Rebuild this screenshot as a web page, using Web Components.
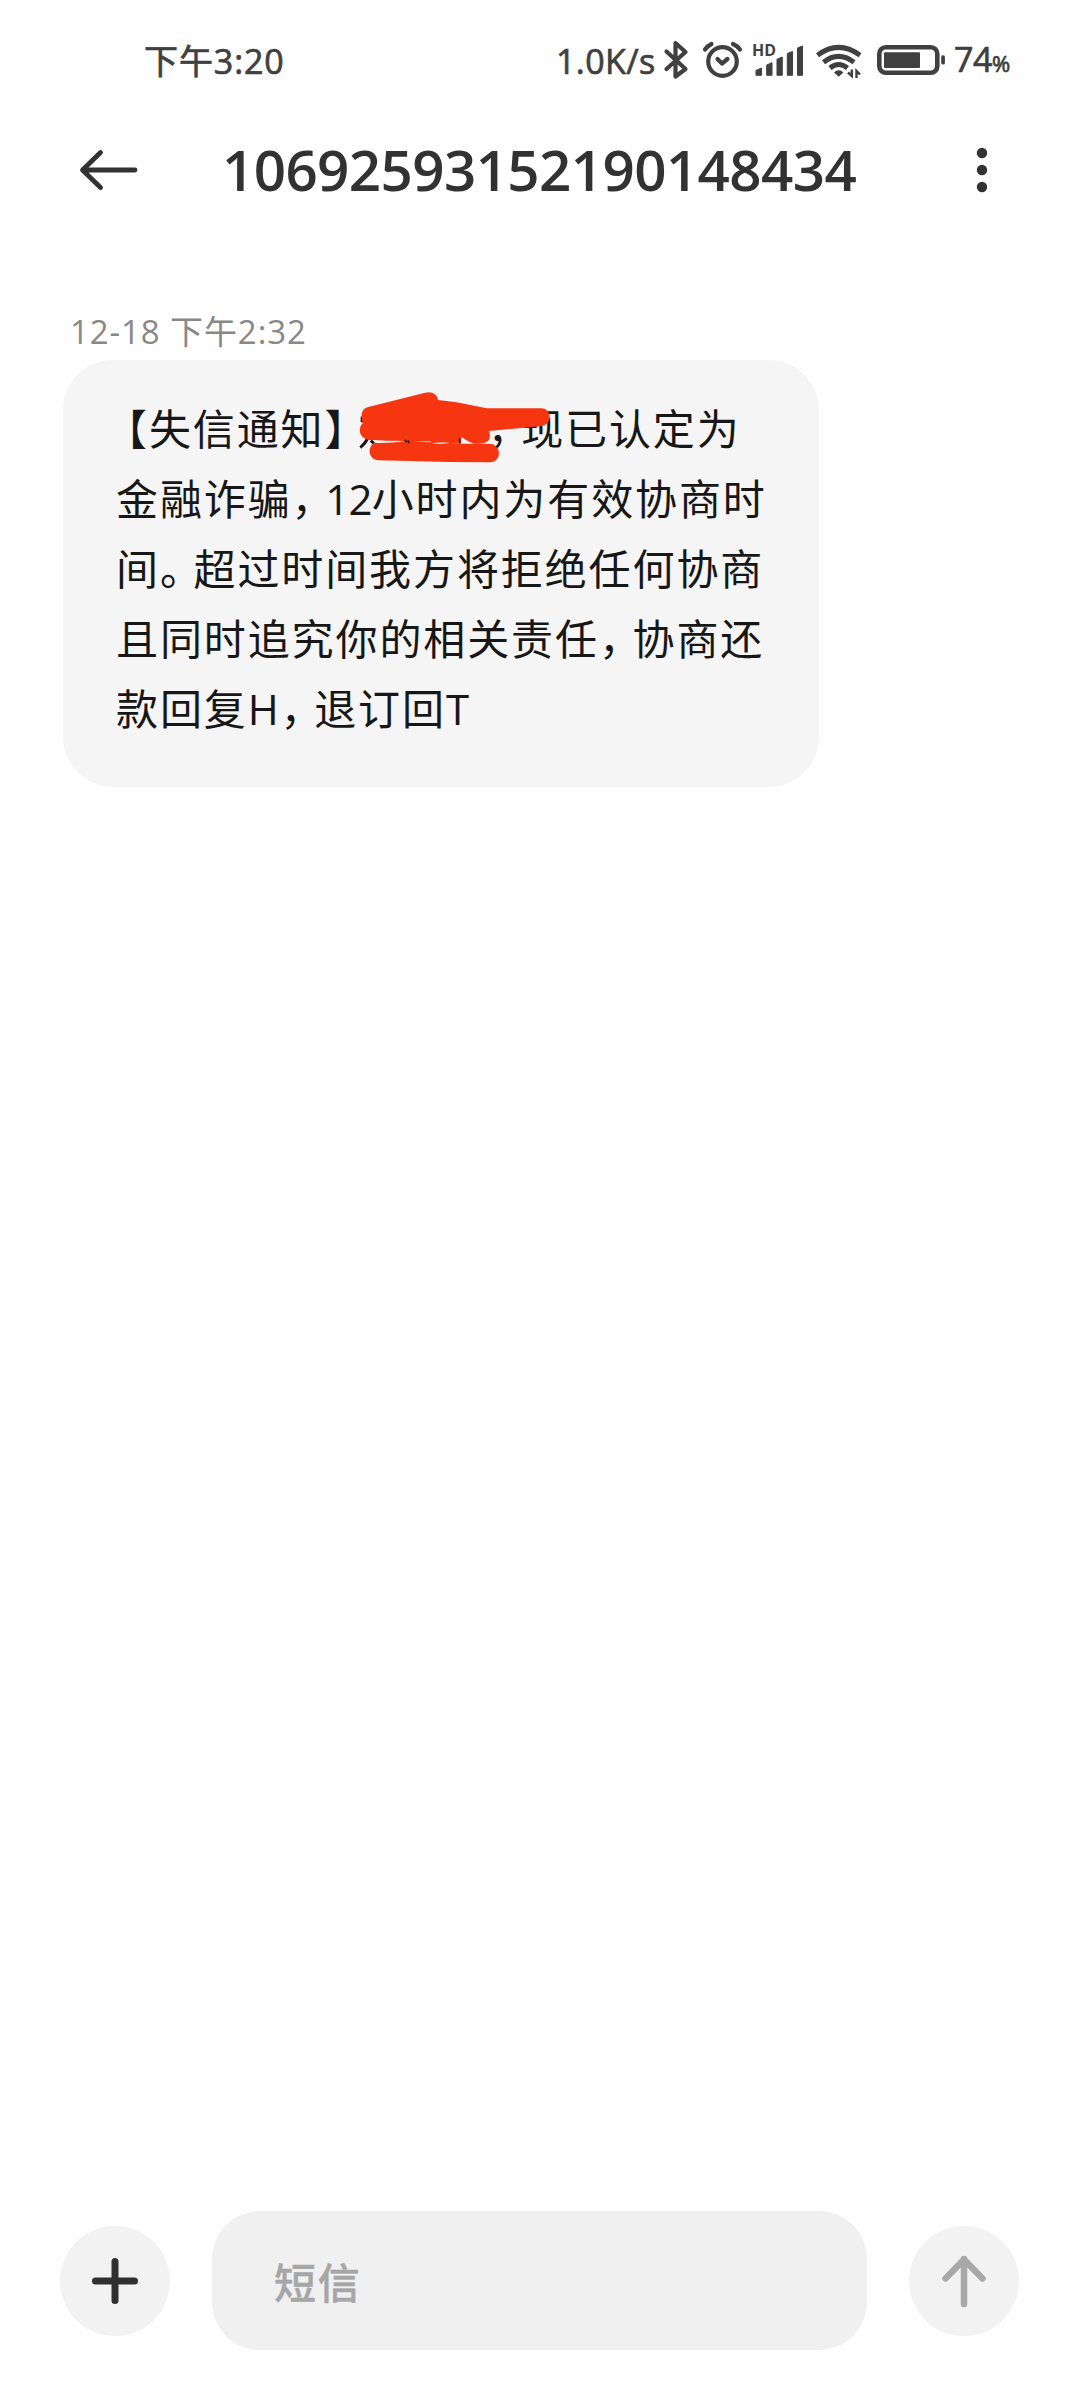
<!DOCTYPE html>
<html lang="zh-CN">
<head>
<meta charset="utf-8">
<meta name="viewport" content="width=device-width">
<title>短信</title>
<style>
  body {
    margin: 0;
    background: #fefefe;
    font-family: "Open Sans", "Noto Sans CJK SC", sans-serif;
  }

  .tight {
    letter-spacing: -8.4px;
  }

  .open {
    margin-left: -11px;
  }

  .close {
    letter-spacing: -10px;
  }

  .digits {
    letter-spacing: -0.8px;
  }

  .hidden-name {
    display: inline-block;
    width: 131px;
  }
</style>
</head>
<body>
<message-screen>
  <status-bar slot="status" time="下午3:20" speed="1.0K/s" battery="74"></status-bar>
  <thread-header slot="header">10692593152190148434</thread-header>
  <message-bubble time="12-18 下午2:32"><span class="open">【</span>失信通知<span class="close">】</span><span class="hidden-name"></span><span class="tight">，</span>现已认定为<br>金融诈骗<span class="tight">，</span><span class="digits">12</span>小时内为有效协商时<br>间<span class="tight">。</span>超过时间我方将拒绝任何协商<br>且同时追究你的相关责任<span class="tight">，</span>协商还<br>款回复H<span class="tight">，</span>退订回T<scribble-mark slot="mark"></scribble-mark></message-bubble>
  <message-composer slot="composer">短信</message-composer>
</message-screen>

<script>
/**
 * Full-height screen: status bar, header, thread, composer
 */
class MessageScreen extends HTMLElement {
	constructor() {
		super();
		this.attachShadow({ mode: 'open' });
	}

	connectedCallback() {
		this.shadowRoot.innerHTML = `
      <style>
        :host {
          display: flex;
          flex-direction: column;
          width: 1080px;
          height: 2400px;
          overflow: hidden;
        }

        main {
          flex: 1;
          padding: 87px 63px 0;
        }
      </style>
      <slot name="status"></slot>
      <slot name="header"></slot>
      <main><slot></slot></main>
      <slot name="composer"></slot>
    `;
	}
}

/**
 * Phone status bar with clock, network speed and system icons
 */
class StatusBar extends HTMLElement {
	constructor() {
		super();
		this.attachShadow({ mode: 'open' });
	}

	connectedCallback() {
		this.shadowRoot.innerHTML = `
      <style>
        :host {
          display: flex;
          align-items: center;
          box-sizing: border-box;
          height: 122px;
          padding: 0 66px 0 144px;
          color: #404040;
          font-size: 34px;
          line-height: 50px;
          white-space: nowrap;
          -webkit-text-stroke: 0.7px #404040;
        }

        .clock {
          letter-spacing: 0.9px;
        }

        .speed {
          margin-left: auto;
          width: 104px;
          letter-spacing: 0.4px;
        }

        svg {
          display: block;
          flex: none;
          height: 50px;
          -webkit-text-stroke: 0;
        }

        .line {
          fill: none;
          stroke: #404040;
          stroke-width: 4.2;
          stroke-linecap: round;
          stroke-linejoin: round;
        }

        .level {
          width: 60px;
          margin-left: 4px;
          letter-spacing: -0.4px;
        }

        small {
          font-size: 22px;
        }
      </style>
      <span class="clock">${this.getAttribute('time')}</span>
      <span class="speed">${this.getAttribute('speed')}</span>
      <svg width="38" viewBox="660 36 38 50">
        <path class="line" d="M666.500 51.500 685.500 69 675.500 76.500V43L685.500 52 666.500 69"/>
      </svg>
      <svg width="52" viewBox="698 36 52 50">
        <g class="line">
          <circle cx="722.500" cy="61.500" r="14.300"/>
          <path d="M705 49.500Q707.500 46 711.500 44M733 44Q737.500 46 740 49.500"/>
          <path d="M717.500 59 722 63.500 727.500 59"/>
        </g>
      </svg>
      <svg width="60" viewBox="750 36 60 50" fill="#404040">
        <text x="752" y="56" font-size="16" font-weight="700" textLength="24" lengthAdjust="spacingAndGlyphs">HD</text>
        <g stroke="#404040" stroke-width="1" stroke-linejoin="round">
          <path d="M756 70.500 761.500 68V75.300H756ZM766.700 65 772 62.700V75.300H766.700ZM777 59.300 782.300 57V75.300H777ZM787.300 53.500 792.500 51.500V75.300H787.300ZM797.500 48 802.500 46V75.300H797.500Z"/>
        </g>
      </svg>
      <svg width="62" viewBox="810 36 62 50" fill="none" stroke="#404040" stroke-width="5">
        <path d="M817.500 55.300Q838.500 39.500 860 55.300M823.500 62.200Q838.500 50.500 854 62.200M830 68Q838.500 61 847.500 68" />
        <path fill="#404040" stroke="none" d="M838.700 70.300Q841.500 70.300 843.300 72.500L838.700 76.700 834 72.500Q836 70.300 838.700 70.300Z"/>
        <path stroke-width="2.400" d="M851.800 69.500V76L848 72.500M856.500 78V71L860 74.500"/>
      </svg>
      <svg width="78" viewBox="872 36 78 50" fill="#404040">
        <rect x="879.300" y="47.300" width="58" height="25.500" rx="6.500" fill="none" stroke="#404040" stroke-width="4.600"/>
        <rect x="884" y="52.300" width="36" height="15.700" rx="1"/>
        <rect x="941.200" y="55.300" width="3.700" height="9.200" rx="1.500"/>
      </svg>
      <span class="level">${this.getAttribute('battery')}<small>%</small></span>
    `;
	}
}

/**
 * Back arrow, sender number and overflow menu
 */
class ThreadHeader extends HTMLElement {
	constructor() {
		super();
		this.attachShadow({ mode: 'open' });
	}

	connectedCallback() {
		this.shadowRoot.innerHTML = `
      <style>
        :host {
          display: flex;
          align-items: center;
          box-sizing: border-box;
          height: 96px;
          padding: 0 76px;
          color: #323232;
        }

        h1 {
          margin: 0 auto 0 82px;
          font-size: 56.5px;
          line-height: 80px;
          font-weight: 600;
          letter-spacing: -0.6px;
        }

        svg {
          display: block;
        }
      </style>
      <svg width="64" height="60" viewBox="0 0 64 60" fill="none" stroke="currentColor" stroke-width="4.800" stroke-linecap="round" stroke-linejoin="round">
        <path d="M59 30H7M24.500 12.500 6.500 30 24.500 47.500"/>
      </svg>
      <h1><slot></slot></h1>
      <svg width="44" height="60" viewBox="0 0 44 60" fill="currentColor">
        <circle cx="22" cy="13" r="5.200"/><circle cx="22" cy="30" r="5.200"/><circle cx="22" cy="47" r="5.200"/>
      </svg>
    `;
	}
}

/**
 * Received message with its timestamp
 */
class MessageBubble extends HTMLElement {
	constructor() {
		super();
		this.attachShadow({ mode: 'open' });
	}

	connectedCallback() {
		this.shadowRoot.innerHTML = `
      <style>
        :host {
          display: block;
        }

        time {
          display: block;
          height: 55px;
          padding-left: 7px;
          color: #888;
          font-size: 33px;
          line-height: 54px;
          letter-spacing: 0.9px;
        }

        .bubble {
          position: relative;
          box-sizing: border-box;
          width: 756px;
          height: 427px;
          padding: 34px 0 0 53px;
          border-radius: 50px;
          background: #f5f5f5;
          color: #171717;
          font-size: 42px;
          line-height: 70px;
          letter-spacing: 1.9px;
          white-space: nowrap;
        }
      </style>
      <time>${this.getAttribute('time')}</time>
      <div class="bubble"><slot></slot><slot name="mark"></slot></div>
    `;
	}
}

/**
 * Red marker strokes over the name in the first line
 */
class ScribbleMark extends HTMLElement {
	constructor() {
		super();
		this.attachShadow({ mode: 'open' });
	}

	connectedCallback() {
		this.shadowRoot.innerHTML = `
      <style>
        :host {
          position: absolute;
          left: 277px;
          top: 20px;
        }

        svg {
          display: block;
        }
      </style>
      <svg width="220" height="100" viewBox="0 0 660 300">
        <path d="M61 203Q75 192 84 174M92 182 102 190M62 114H70M62 122H70" fill="none" stroke="#171717" stroke-width="9"/>
        <g fill="#f63511">
          <path d="M65 104Q66 86 85 81L255 38Q288 32 294 60L350 67 440 85H603C637 85 640 137 600 139L447 153Q454 178 440 186Q425 193 405 191Q390 190 366 172L362 190 210 186 100 180C60 184 50 148 68 130Q64 116 65 104Z"/>
          <path d="M116 189 230 184 380 191H447C486 191 488 247 447 247L330 246 119 241C84 241 80 198 105 188Z"/>
        </g>
        <path d="M105 185Q130 189 180 185L190 183Q160 181 105 185ZM222 185 268 184 275 187ZM275 190Q305 186 330 189L300 192ZM366 172 382 189 362 190Z" fill="#f5f5f5"/>
        <path d="M195 180 200 187M204 182 207 189M358 176 360 190" stroke="#171717" stroke-width="5"/>
      </svg>
    `;
	}
}

/**
 * Attach button, input field and send button
 */
class MessageComposer extends HTMLElement {
	constructor() {
		super();
		this.attachShadow({ mode: 'open' });
	}

	connectedCallback() {
		this.shadowRoot.innerHTML = `
      <style>
        :host {
          display: flex;
          align-items: center;
          justify-content: space-between;
          padding: 0 61px 50px 60px;
        }

        .round {
          display: grid;
          place-items: center;
          width: 110px;
          height: 110px;
          border-radius: 50%;
          background: #f2f2f2;
        }

        .field {
          display: flex;
          align-items: center;
          box-sizing: border-box;
          width: 655px;
          height: 139px;
          padding-left: 62px;
          border-radius: 48px;
          background: #f0f0f0;
          color: #a6a6a6;
          font-size: 42px;
          font-weight: 500;
          letter-spacing: 1.700px;
          -webkit-text-stroke: 0.4px #a6a6a6;
        }

        svg {
          fill: none;
          stroke: #303030;
          stroke-width: 7;
          stroke-linecap: round;
          stroke-linejoin: round;
        }

        .send {
          stroke: #a8a8a8;
          stroke-width: 6.500;
        }
      </style>
      <div class="round">
        <svg width="60" height="60" viewBox="0 0 60 60"><path d="M30 10.500V49.500M10.500 30H49.500"/></svg>
      </div>
      <div class="field"><slot></slot></div>
      <div class="round">
        <svg class="send" width="60" height="60" viewBox="0 0 60 60"><path d="M30 53V8M11.500 27.500 30 8.500 48.500 27.500"/></svg>
      </div>
    `;
	}
}

customElements.define('message-screen', MessageScreen);
customElements.define('status-bar', StatusBar);
customElements.define('thread-header', ThreadHeader);
customElements.define('message-bubble', MessageBubble);
customElements.define('scribble-mark', ScribbleMark);
customElements.define('message-composer', MessageComposer);
</script>
</body>
</html>
